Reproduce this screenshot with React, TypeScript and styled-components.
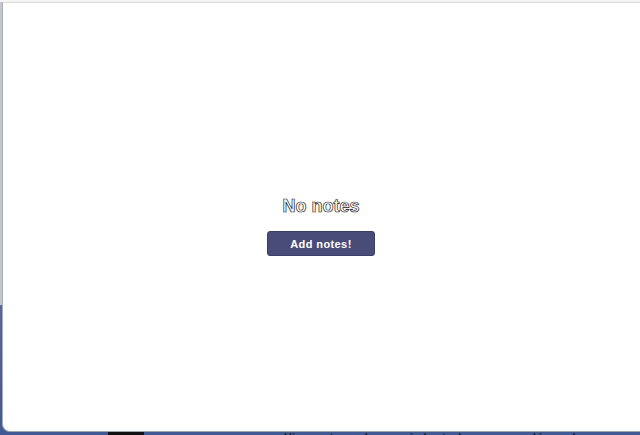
import styled, { createGlobalStyle } from "styled-components";

const GlobalStyle = createGlobalStyle`
  html, body {
    margin: 0;
    padding: 0;
    width: 640px;
    height: 435px;
    overflow: hidden;
    background: #f4f4f4;
  }
`;

const Desktop = styled.div`
  position: relative;
  width: 640px;
  height: 435px;
  overflow: hidden;
  background: linear-gradient(to bottom, #f4f4f4 0, #f4f4f4 2px, #c3c6cc 2px, #c3c6cc 305px, #5468a0 305px, #3f5a94 435px);
`;

const BackText = styled.div`
  position: absolute;
  left: 108px;
  top: 431px;
  display: flex;
  gap: 140px;
  font-family: "Liberation Sans", Arial, sans-serif;
  font-size: 11px;
  font-weight: bold;
  color: #222;
  white-space: nowrap;
`;

const DarkBlock = styled.span`
  display: inline-block;
  width: 36px;
  height: 6px;
  background: #111;
`;

const Window = styled.div`
  position: absolute;
  left: 2px;
  top: 2px;
  width: 660px;
  height: 430px;
  box-sizing: border-box;
  background: #fff;
  border-top: 1px solid #dcdcdc;
  border-left: 1px solid #a9adb5;
  border-bottom: 1px solid #9ea2aa;
  border-bottom-left-radius: 8px;
  display: flex;
  flex-direction: column;
  align-items: flex-start;
  font-family: "Liberation Sans", Arial, sans-serif;
`;

const Empty = styled.div`
  width: 636px;
  flex: 1;
  display: flex;
  flex-direction: column;
  align-items: center;
  justify-content: center;
  gap: 14px;
  padding-top: 18px;
`;

const Title = styled.h2`
  margin: 0;
  font-size: 18px;
  font-weight: bold;
  color: #fff;
  -webkit-text-stroke: 0.7px #1a1a1a;
`;

const AddButton = styled.button`
  width: 108px;
  height: 25px;
  border: 1px solid #3c3d62;
  border-radius: 3px;
  background: #4a4c78;
  color: #fff;
  font-family: "Liberation Sans", Arial, sans-serif;
  font-size: 11px;
  font-weight: bold;
  letter-spacing: 0.4px;
  cursor: pointer;
`;

export default function App() {
  return (
    <>
      <GlobalStyle />
      <Desktop>
        <BackText>
          <DarkBlock />
          <span>Hi... a note can be a reminder, task manager and journal</span>
        </BackText>
        <Window>
          <Empty>
            <Title>No notes</Title>
            <AddButton>Add notes!</AddButton>
          </Empty>
        </Window>
      </Desktop>
    </>
  );
}
